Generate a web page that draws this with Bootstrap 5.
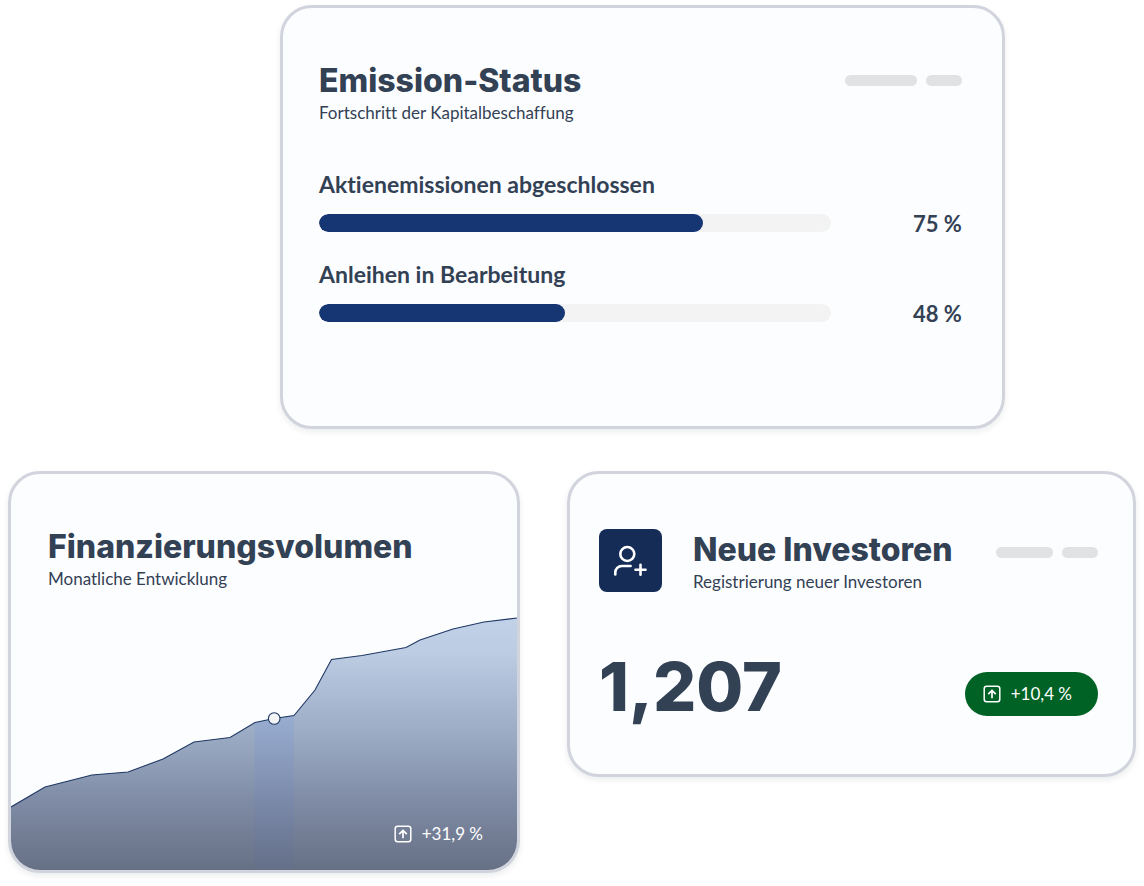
<!DOCTYPE html>
<html lang="de">
<head>
<meta charset="utf-8">
<meta name="viewport" content="width=device-width, initial-scale=1">
<title>Kapitalübersicht</title>
<link href="https://cdn.jsdelivr.net/npm/bootstrap@5.3.0/dist/css/bootstrap.min.css" rel="stylesheet">
<style>
  :root { --ink: #334155; --navy: #153672; }
  body { font-family: Lato, "Open Sans", sans-serif; font-variant-ligatures: none; color: var(--ink); background: #fff; }
  .dashboard { padding: 5px 8px 12px; }
  .top-grid { display: grid; grid-template-columns: 272fr 725fr 131fr; margin-bottom: 42px; }
  .top-grid > .card { grid-column: 2; }
  .bottom-grid { display: grid; grid-template-columns: 512fr 569fr; column-gap: 47px; align-items: start; }
  .panel { border: 3px solid #d1d4dd; border-radius: 32px; background: #fcfdff; color: var(--ink); box-shadow: 0 3px 6px rgba(16, 24, 40, .08); min-width: 0; }
  .panel-title { font-family: Inter, Lato, sans-serif; font-size: 32px; line-height: 42px; font-weight: 800; margin: 0; white-space: nowrap; }
  .panel-sub { font-size: 17px; line-height: 22px; margin: 0; }
  .status { padding: 52px 40px 104px 36px; }
  .volume { overflow: hidden; }
  .volume-head { padding: 52px 37px 27px; }
  .investors { padding: 55px 35px 48px 29px; }
  .meters { margin-top: 47px; display: grid; row-gap: 29px; }
  .meter-label { font-size: 23px; line-height: 26px; font-weight: 700; margin-bottom: 17px; }
  .meter-value { font-size: 22px; line-height: 18px; font-weight: 700; width: 49px; margin-left: 82px; padding-top: 1px; margin-bottom: -1px; white-space: nowrap; }
  .track { height: 18px; border-radius: 9px; background: #f3f3f3; }
  .track .progress-bar { background: var(--navy); border-radius: 9px; }
  .stub { height: 11px; width: 36px; border-radius: 6px; background: #e1e2e4; }
  .stub-md { width: 57px; }
  .stub-lg { width: 72px; }
  .stubs { gap: 9px; padding-top: 15px; }
  .investors .stubs { padding-top: 18px; }
  .tile { width: 63px; height: 63px; border-radius: 8px; background: #152c57; flex: none; margin-right: 31px; }
  .total { font-family: Inter, Lato, sans-serif; font-size: 68px; line-height: 80px; font-weight: 800; }
  .totals { margin-top: 53px; }
  .trend { font-size: 17px; line-height: 24px; color: #fff; gap: 10px; }
  .trend-pill { background: #006325; border-radius: 22px; padding: 10px 26px 10px 18px; margin-top: 16px; }
  .trend-over { position: absolute; right: 34px; bottom: 24px; }
  .chart { display: block; width: 100%; height: auto; }
</style>
</head>
<body>
<main class="dashboard container-fluid">
  <div class="top-grid">
    <section class="card panel status">
      <div class="d-flex justify-content-between">
        <div>
          <h2 class="panel-title">Emission-Status</h2>
          <p class="panel-sub">Fortschritt der Kapitalbeschaffung</p>
        </div>
        <div class="d-flex stubs" aria-hidden="true"><span class="stub stub-lg"></span><span class="stub"></span></div>
      </div>
      <div class="meters">
        <div>
          <div class="meter-label" id="m1">Aktienemissionen abgeschlossen</div>
          <div class="d-flex align-items-center">
            <div class="progress track flex-grow-1" role="progressbar" aria-labelledby="m1" aria-valuenow="75" aria-valuemin="0" aria-valuemax="100"><div class="progress-bar" style="width:75%"></div></div>
            <div class="meter-value">75 %</div>
          </div>
        </div>
        <div>
          <div class="meter-label" id="m2">Anleihen in Bearbeitung</div>
          <div class="d-flex align-items-center">
            <div class="progress track flex-grow-1" role="progressbar" aria-labelledby="m2" aria-valuenow="48" aria-valuemin="0" aria-valuemax="100"><div class="progress-bar" style="width:48%"></div></div>
            <div class="meter-value">48 %</div>
          </div>
        </div>
      </div>
    </section>
  </div>

  <div class="bottom-grid">
    <section class="card panel volume">
      <div class="volume-head">
        <h2 class="panel-title">Finanzierungsvolumen</h2>
        <p class="panel-sub">Monatliche Entwicklung</p>
      </div>
      <svg class="chart" viewBox="0 0 506 253" role="img" aria-label="Monatliche Entwicklung">
        <defs>
          <linearGradient id="area" x1="0" y1="0" x2="0" y2="1">
            <stop offset="0" stop-color="#c1d1e8"/><stop offset=".14" stop-color="#bccce3"/>
            <stop offset=".5" stop-color="#98a7c0"/><stop offset=".72" stop-color="#808ca6"/><stop offset="1" stop-color="#667085"/>
          </linearGradient>
          <linearGradient id="band" x1="0" y1="0" x2="0" y2="1">
            <stop offset="0" stop-color="#8aa6d8" stop-opacity=".45"/><stop offset="1" stop-color="#5b6a94" stop-opacity=".18"/>
          </linearGradient>
        </defs>
        <path fill="url(#area)" d="M0 190 34 170 81 158 117 155 152 142 183 125 219 120.500 244 105.500 263 101.500 283 98.500 304 73 320.500 42.500 351 38.500 395 30.500 409 23 442 12 473 5 506 1V253H0Z"/>
        <path fill="url(#band)" d="M243.500 105.500 263 101.500 283 98.500V253H243.500Z"/>
        <path fill="none" stroke="#1f3864" stroke-width="1.100" d="M0 190 34 170 81 158 117 155 152 142 183 125 219 120.500 244 105.500 263 101.500 283 98.500 304 73 320.500 42.500 351 38.500 395 30.500 409 23 442 12 473 5 506 1"/>
        <circle cx="263.200" cy="101.500" r="5.800" fill="#f3f4f6" stroke="#1f3864" stroke-width="1.100"/>
      </svg>
      <div class="trend trend-over d-flex align-items-center">
        <svg width="18" height="18" viewBox="0 0 18 18" fill="none" stroke="#fff" stroke-width="1.500" aria-hidden="true"><rect x="1.200" y="1.200" width="15.600" height="15.600" rx="2.500"/><path stroke-width="1.700" d="M9 13.300V5.800M5.200 9.200 9 5.400l3.800 3.800"/></svg>
        <span>+31,9 %</span>
      </div>
    </section>

    <section class="card panel investors">
      <div class="d-flex">
        <div class="tile d-flex">
          <svg width="63" height="63" viewBox="0 0 63 63" fill="none" stroke="#fff" stroke-width="2.600" stroke-linecap="round" aria-hidden="true"><circle cx="28.300" cy="25" r="7"/><path d="M16.300 45.500V43.500a6.500 6.500 0 0 1 6.500-6.500H31.600M41.500 35.700V45.700M36.500 40.700H46.500"/></svg>
        </div>
        <div>
          <h2 class="panel-title">Neue Investoren</h2>
          <p class="panel-sub">Registrierung neuer Investoren</p>
        </div>
        <div class="d-flex stubs ms-auto" aria-hidden="true"><span class="stub stub-md"></span><span class="stub"></span></div>
      </div>
      <div class="totals d-flex justify-content-between align-items-center">
        <div class="total">1,207</div>
        <div class="trend trend-pill d-flex align-items-center">
          <svg width="18" height="18" viewBox="0 0 18 18" fill="none" stroke="#fff" stroke-width="1.500" aria-hidden="true"><rect x="1.200" y="1.200" width="15.600" height="15.600" rx="2.500"/><path stroke-width="1.700" d="M9 13.300V5.800M5.200 9.200 9 5.400l3.800 3.800"/></svg>
          <span>+10,4 %</span>
        </div>
      </div>
    </section>
  </div>
</main>
<script src="https://cdn.jsdelivr.net/npm/bootstrap@5.3.0/dist/js/bootstrap.bundle.min.js"></script>
</body>
</html>
